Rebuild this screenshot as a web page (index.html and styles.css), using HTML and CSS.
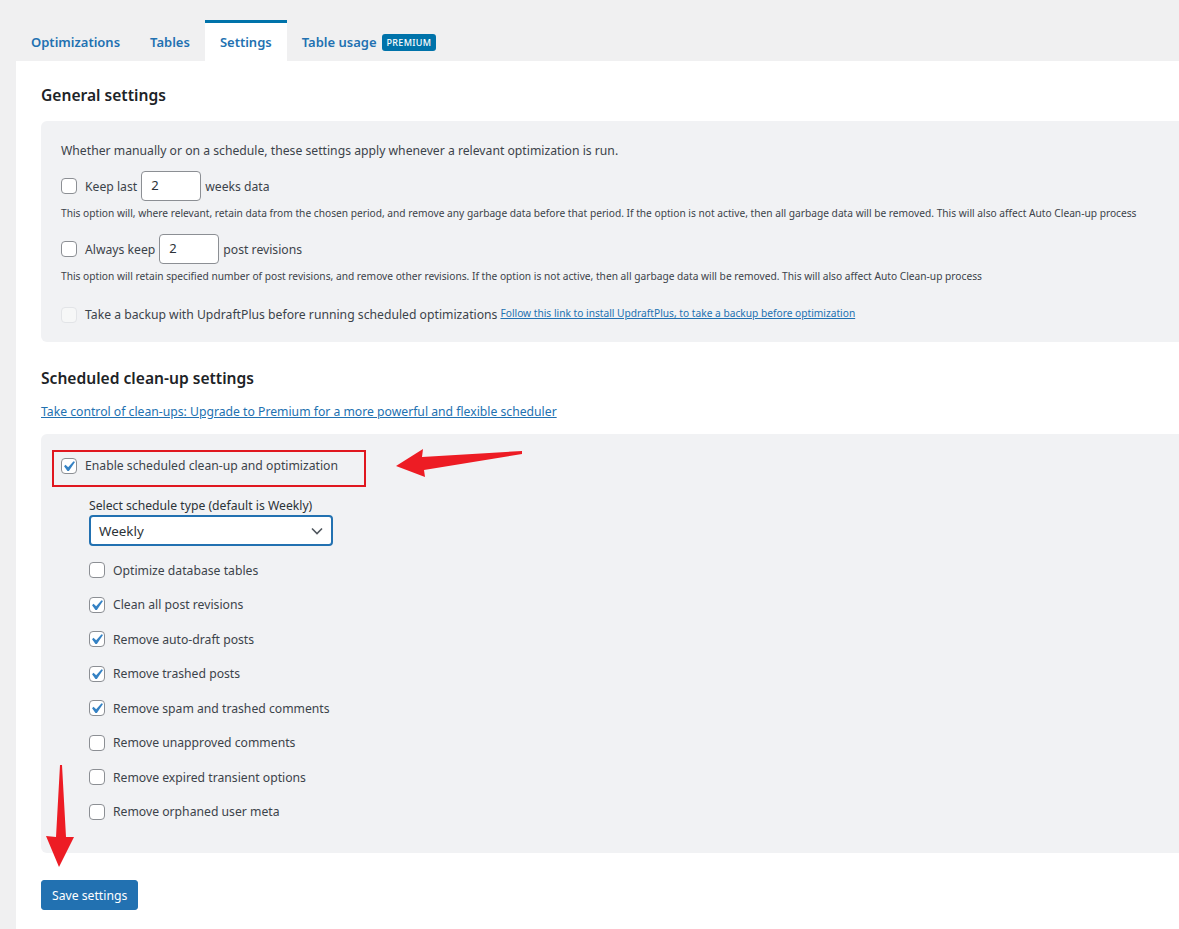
FILE: index.html
```html
<!DOCTYPE html>
<html lang="en">
<head>
<meta charset="utf-8">
<title>WP-Optimize Settings</title>
<link rel="stylesheet" href="styles.css">
</head>
<body>
<div class="wrap">
  <nav class="tabs">
    <a class="tab">Optimizations</a>
    <a class="tab">Tables</a>
    <a class="tab active">Settings</a>
    <a class="tab">Table usage <span class="badge">PREMIUM</span></a>
  </nav>
  <main class="panel">
    <h2 class="heading first">General settings</h2>
    <section class="box box-general">
      <p class="intro">Whether manually or on a schedule, these settings apply whenever a relevant optimization is run.</p>
      <div class="row row-input">
        <span class="cb"></span>
        <span class="label">Keep last</span>
        <span class="num">2</span>
        <span class="label">weeks data</span>
      </div>
      <p class="desc">This option will, where relevant, retain data from the chosen period, and remove any garbage data before that period. If the option is not active, then all garbage data will be removed. This will also affect Auto Clean-up process</p>
      <div class="row row-input second">
        <span class="cb"></span>
        <span class="label">Always keep</span>
        <span class="num">2</span>
        <span class="label">post revisions</span>
      </div>
      <p class="desc">This option will retain specified number of post revisions, and remove other revisions. If the option is not active, then all garbage data will be removed. This will also affect Auto Clean-up process</p>
      <div class="row row-backup">
        <span class="cb disabled"></span>
        <span class="label">Take a backup with UpdraftPlus before running scheduled optimizations</span>
        <a class="small-link">Follow this link to install UpdraftPlus, to take a backup before optimization</a>
      </div>
    </section>

    <h2 class="heading">Scheduled clean-up settings</h2>
    <p class="upgrade"><a>Take control of clean-ups: Upgrade to Premium for a more powerful and flexible scheduler</a></p>

    <section class="box box-schedule">
      <div class="row row-enable">
        <span class="cb checked"><svg viewBox="0 0 20 20" width="21" height="21"><path d="M14.83 4.89l1.34.94-5.81 8.38H9.02L5.78 9.67l1.34-1.25 2.57 2.4z"/></svg></span>
        <span class="label">Enable scheduled clean-up and optimization</span>
      </div>
      <div class="schedule">
        <div class="select-label">Select schedule type (default is Weekly)</div>
        <div class="select">
          <span>Weekly</span>
          <svg class="chev" viewBox="0 0 12 8" width="12" height="8"><path d="M1 1.5l5 5 5-5" fill="none" stroke="#50575e" stroke-width="1.6"/></svg>
        </div>
        <ul class="opts">
          <li><span class="cb"></span>Optimize database tables</li>
          <li><span class="cb checked"><svg viewBox="0 0 20 20" width="21" height="21"><path d="M14.83 4.89l1.34.94-5.81 8.38H9.02L5.78 9.67l1.34-1.25 2.57 2.4z"/></svg></span>Clean all post revisions</li>
          <li><span class="cb checked"><svg viewBox="0 0 20 20" width="21" height="21"><path d="M14.83 4.89l1.34.94-5.81 8.38H9.02L5.78 9.67l1.34-1.25 2.57 2.4z"/></svg></span>Remove auto-draft posts</li>
          <li><span class="cb checked"><svg viewBox="0 0 20 20" width="21" height="21"><path d="M14.83 4.89l1.34.94-5.81 8.38H9.02L5.78 9.67l1.34-1.25 2.57 2.4z"/></svg></span>Remove trashed posts</li>
          <li><span class="cb checked"><svg viewBox="0 0 20 20" width="21" height="21"><path d="M14.83 4.89l1.34.94-5.81 8.38H9.02L5.78 9.67l1.34-1.25 2.57 2.4z"/></svg></span>Remove spam and trashed comments</li>
          <li><span class="cb"></span>Remove unapproved comments</li>
          <li><span class="cb"></span>Remove expired transient options</li>
          <li><span class="cb"></span>Remove orphaned user meta</li>
        </ul>
      </div>
      <div class="highlight"></div>
    </section>

    <button class="save">Save settings</button>
  </main>

  <svg class="arrow arrow-left" width="140" height="40" viewBox="0 0 140 40">
    <path d="M0 17 L27 0 L26 8 L126 2 L126 5 L28 21 L29 28 Z" fill="#ed1c24"/>
  </svg>
  <svg class="arrow arrow-down" width="34" height="106" viewBox="0 0 34 106">
    <path d="M15 0 L17 0 L21 72 L29 72 L14 102 L1 71 L11 72 Z" fill="#ed1c24"/>
  </svg>
</div>
</body>
</html>
```

FILE: styles.css
```css
* { box-sizing: border-box; }

html, body {
  margin: 0;
  padding: 0;
  background: #f0f0f1;
  font-family: "Noto Sans", "Open Sans", sans-serif;
  color: #3c434a;
}

.wrap {
  position: relative;
  padding: 20px 0 0 16px;
  min-height: 929px;
  display: flex;
  flex-direction: column;
}

.tabs {
  display: flex;
  height: 41px;
}

.tab {
  display: flex;
  align-items: center;
  gap: 5px;
  padding: 0 15px;
  border-top: 3px solid transparent;
  font-size: 13px;
  font-weight: 600;
  color: #2271b1;
  text-decoration: none;
  cursor: pointer;
}

.tab.active {
  background: #fff;
  border-top-color: #0073aa;
}

.badge {
  display: inline-block;
  background: #0073aa;
  color: #fff;
  font-size: 9px;
  font-weight: 500;
  letter-spacing: 0.3px;
  line-height: 17px;
  padding: 0 5px;
  border-radius: 3px;
}

.panel {
  flex: 1;
  background: #fff;
  padding: 0 0 20px 25px;
}

.heading {
  margin: 24px 0 0;
  font-size: 15.6px;
  line-height: 24px;
  font-weight: 600;
  color: #1d2327;
}

.heading.first { margin-top: 22px; }

.box {
  background: #f1f2f4;
  border-radius: 6px 0 0 6px;
  padding: 20px 0 20px 20px;
}

.box-general { margin-top: 14px; padding-top: 20px; padding-bottom: 19px; }

.intro {
  margin: 0;
  font-size: 12.2px;
  line-height: 20px;
}

.row {
  display: flex;
  align-items: center;
}

.label {
  font-size: 12.2px;
}

.row .cb { margin-right: 8px; }

.row-input { margin-top: 10px; }
.row-input.second { margin-top: 12px; }

.num {
  width: 60px;
  height: 30px;
  margin: 0 4px;
  padding: 3px 9px;
  background: #fff;
  border: 1px solid #8c8f94;
  border-radius: 4px;
  font-size: 13px;
  line-height: 20px;
  color: #2c3338;
}

.desc {
  margin: 3px 0 0;
  font-size: 10.2px;
  line-height: 18px;
  color: #3c434a;
}

.row-backup { margin-top: 21px; }
.row-backup .label { margin-right: 3px; }

.small-link {
  font-size: 10.2px;
  color: #2271b1;
  text-decoration: underline;
  align-self: flex-start;
}

.cb {
  position: relative;
  flex: none;
  display: inline-block;
  width: 16px;
  height: 16px;
  background: #fff;
  border: 1px solid #8c8f94;
  border-radius: 4px;
}

.cb svg {
  position: absolute;
  left: -4px;
  top: -3px;
  fill: #3582c4;
}

.cb.disabled {
  background: #f6f7f7;
  border-color: #e2e4e7;
}

.upgrade {
  margin: 12px 0 0;
  font-size: 12.2px;
  line-height: 20px;
}

.upgrade a {
  color: #2271b1;
  text-decoration: underline;
}

.box-schedule {
  position: relative;
  margin-top: 12px;
  padding: 23px 0 24px 20px;
}

.highlight {
  position: absolute;
  left: 11px;
  top: 16px;
  width: 314px;
  height: 37px;
  border: 2px solid #e0171f;
}

.schedule {
  padding-left: 28px;
  margin-top: 22px;
}

.select-label {
  font-size: 12.2px;
  line-height: 20px;
  color: #2c3338;
}

.select {
  display: flex;
  align-items: center;
  justify-content: space-between;
  width: 244px;
  height: 31px;
  margin-top: -1px;
  padding: 0 8px 0 8px;
  background: #fff;
  border: 2px solid #2271b1;
  border-radius: 4px;
  font-size: 13.4px;
  color: #2c3338;
}

.opts {
  list-style: none;
  margin: 7px 0 0;
  padding: 0;
}

.opts li {
  display: flex;
  align-items: center;
  height: 34.5px;
  font-size: 12.2px;
  color: #3c434a;
}

.opts .cb { margin-right: 8px; }

.save {
  align-self: flex-start;
  margin-top: 27px;
  height: 30px;
  padding: 0 10px;
  background: #2271b1;
  color: #fff;
  border: 1px solid #2271b1;
  border-radius: 3px;
  font-family: inherit;
  font-size: 12.2px;
  cursor: pointer;
}

.arrow {
  position: absolute;
}

.arrow-left {
  left: 396px;
  top: 449px;
}

.arrow-down {
  left: 45px;
  top: 765px;
}
```
